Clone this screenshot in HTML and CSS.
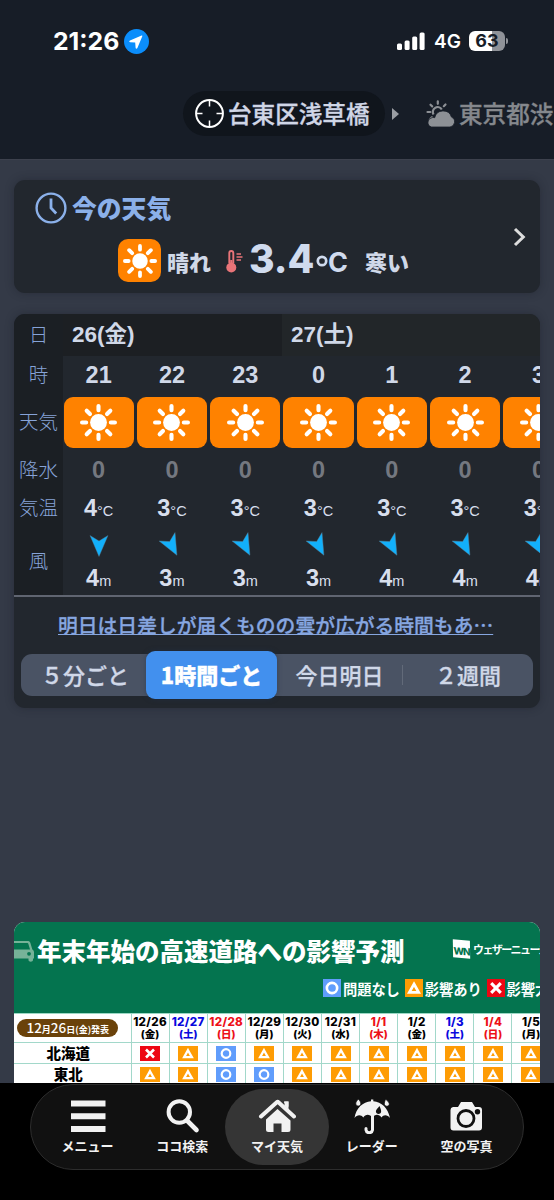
FILE: index.html
```html
<!DOCTYPE html>
<html lang="ja">

<head>
    <meta charset="UTF-8">
    <meta name="viewport" content="width=device-width, initial-scale=1.0">
    <title>マイ天気</title>
    <link rel="stylesheet" href="styles.css">
</head>

<body>
    <!-- Shared icons -->
    <svg class="sprite" width="0" height="0">
        <symbol id="sun" viewBox="0 0 36 36">
            <circle cx="18" cy="18" r="8.2" fill="#fff" />
            <path d="M18 2v4M18 30V34M2 18h4M30 18H34M6.5 6.5l3.2 3.2M26.3 26.3l3.2 3.2M6.5 29.5l3.2-3.2M26.3 9.7l3.2-3.2" stroke="#fff" stroke-width="4" stroke-linecap="round" />
        </symbol>
        <symbol id="wind" viewBox="0 0 20 22">
            <path d="M1 0.5l9 5.5 9-5.5-9 21z" fill="#12b0fb" stroke="#5c7f92" stroke-width=".4" />
        </symbol>
        <symbol id="ok" viewBox="2.5 0 15 15">
            <circle cx="10" cy="7.5" r="4.3" fill="none" stroke="#fff" stroke-width="2.2" />
        </symbol>
        <symbol id="warn" viewBox="2.5 0 15 15">
            <path d="M10 4.2l3.9 7H6.1z" fill="none" stroke="#fff" stroke-width="2.3" />
        </symbol>
        <symbol id="bad" viewBox="2.5 0 15 15">
            <path d="M6 3.5l8 8M14 3.5l-8 8" stroke="#fff" stroke-width="2.6" />
        </symbol>
    </svg>

    <header class="header">
        <div class="status-bar">
            <span class="time">21:26</span>
            <svg class="location" width="25" height="25" viewBox="0 0 25 25">
                <circle cx="12.5" cy="12.5" r="12.5" fill="#0b8dfb" />
                <path d="M17.6 6.6L6 11.4c-1.1.5-.9 1.7.2 1.8l5 .4.4 5.2c.1 1.1 1.3 1.3 1.8.2L18.3 7.300c.3-.6-.1-.9-.7-.7z" fill="#fff" />
            </svg>
            <svg class="signal" width="28" height="19" viewBox="0 0 28 19" fill="#fff">
                <rect x="0" y="11.5" width="5" height="6.5" rx="1.5" />
                <rect x="7.6" y="8.5" width="5" height="9.5" rx="1.5" />
                <rect x="15.2" y="4.5" width="5" height="13.5" rx="1.5" />
                <rect x="22.6" y="0.5" width="5" height="17.5" rx="1.5" />
            </svg>
            <span class="network">4G</span>
            <span class="battery">63</span>
            <span class="battery-tip"></span>
        </div>

        <nav class="places">
            <div class="place active">
                <svg width="29" height="29" viewBox="0 0 29 29" fill="none" stroke="#fff" stroke-width="2">
                    <circle cx="14.5" cy="14.5" r="13.4" />
                    <path d="M14.5 2v5.5M14.5 21.5V27M2 14.5h5.5M21.5 14.5H27" stroke-width="1.5" />
                </svg>
                <span>台東区浅草橋</span>
            </div>
            <span class="place-arrow"></span>
            <div class="place">
                <svg width="29" height="27" viewBox="0 0 29 27" fill="#8d9095">
                    <path d="M7.5 14.5a4.8 4.8 0 1 1 8.300-5" fill="none" stroke="#8d9095" stroke-width="2.2" />
                    <path d="M11.8 1.300v2.5M4.500 4.700l1.700 1.700M1.500 12h2.800M4.200 19l1.700-1.700M19.500 4.500l-1.700 1.700" stroke="#8d9095" stroke-width="2.2" stroke-linecap="round" />
                    <path d="M5.500 27a4.800 4.800 0 0 1 .7-9.400c1-.2 1.900-.1 2.500.1a8.700 8.700 0 0 1 16.800-.6A5.200 5.200 0 0 1 24 27z" stroke="#171d27" stroke-width=".8" />
                </svg>
                <span>東京都渋</span>
            </div>
        </nav>
    </header>

    <main class="content">
        <section class="card now">
            <h2 class="now-title">
                <svg width="32" height="32" viewBox="0 0 32 32" fill="none" stroke="#8bb0e9" stroke-width="2.4">
                    <circle cx="16" cy="16" r="14.4" />
                    <path d="M16 6.5V16l5.2 5.5" stroke-width="2.8" />
                </svg>
                <span>今の天気</span>
            </h2>
            <div class="now-row">
                <span class="now-icon"><svg width="34" height="34"><use href="#sun" /></svg></span>
                <span class="now-text">晴れ</span>
                <svg class="thermo" width="18" height="25" viewBox="0 0 18 25" fill="none" stroke="#e97478">
                    <path d="M3.3 14V4a2 2 0 0 1 4 0v10" stroke-width="1.9" />
                    <circle cx="5.3" cy="18.5" r="5" fill="#e97478" stroke="none" />
                    <path d="M5.3 11v6" stroke-width="2.2" />
                    <path d="M10.5 5h4.5M10.5 8h6M10.5 11h4.5" stroke-width="1.4" />
                </svg>
                <span class="now-temp">3.4</span>
                <svg class="degree" width="12" height="12" viewBox="0 0 12 12"><circle cx="6" cy="6" r="4.2" fill="none" stroke="#d0dbee" stroke-width="2.7" /></svg>
                <span class="now-unit">C</span>
                <span class="now-text feel">寒い</span>
            </div>
            <svg class="chevron" width="14" height="20" viewBox="0 0 14 20"><path d="M2 2l8.3 8L2 18" fill="none" stroke="#ddd" stroke-width="3" /></svg>
        </section>

        <section class="card forecast">
            <div class="table">
                <div class="labels">
                    <span class="r-day">日</span>
                    <span class="r-hour">時</span>
                    <span class="r-sky">天気</span>
                    <span class="r-rain">降水</span>
                    <span class="r-temp">気温</span>
                    <span class="r-wind">風</span>
                </div>
                <div class="scroller">
                    <div class="days">
                        <span class="day today">26(金)</span>
                        <span class="day">27(土)</span>
                    </div>
                    <div class="hours" id="hours">
                        <!-- Hour columns are generated here -->
                    </div>
                </div>
            </div>
            <a class="comment" href="#">明日は日差しが届くものの雲が広がる時間もあ…</a>
            <div class="tabs">
                <span class="tab tab-5min">５分ごと</span>
                <span class="tab active">1時間ごと</span>
                <span class="tab tab-today">今日明日</span>
                <span class="tab tab-week">２週間</span>
            </div>
        </section>

        <section class="road">
            <div class="road-head">
                <div class="road-title">
                    <svg width="20" height="22" viewBox="0 0 20 22" fill="#76b298">
                        <path d="M0 1h13.5c1.600 0 2.400.6 2.900 1.900L18.500 10h-2.300l-1.900-6.300c-.1-.4-.4-.6-.9-.6H0z" />
                        <path d="M0 9.500h17.500c1.500 0 2.500 1.200 2.500 2.700V18.500h-1V20c0 2.200-4.500 2.200-4.500 0v-1.500H0z" />
                        <circle cx="15" cy="13.800" r="1.900" fill="#04744f" />
                    </svg>
                    <h3>年末年始の高速道路への影響予測</h3>
                    <span class="brand-mark">WN</span>
                    <span class="brand">ウェザーニュース</span>
                </div>
                <div class="legend">
                    <svg class="mark ok"><use href="#ok" /></svg><span>問題なし</span>
                    <svg class="mark warn"><use href="#warn" /></svg><span>影響あり</span>
                    <svg class="mark bad"><use href="#bad" /></svg><span>影響大</span>
                </div>
            </div>
            <div class="road-table" id="roadTable">
                <div class="issued-cell"><span class="issued"><b>12</b>月<b>26</b>日(金)発表</span></div>
            </div>
        </section>
    </main>

    <footer class="footer">
        <nav class="tab-bar">
            <a class="item">
                <svg width="36" height="36" viewBox="0 0 36 36" fill="#f2f2f2">
                    <path d="M1 2.5h34.5v6H1zM1 15.3h34.5v6H1zM1 28h34.5v6H1z" />
                </svg>
                <span>メニュー</span>
            </a>
            <a class="item">
                <svg width="36" height="36" viewBox="0 0 36 36" fill="none" stroke="#f2f2f2">
                    <circle cx="15.3" cy="14" r="10.7" stroke-width="4" />
                    <path d="M23 22.5L32.5 32" stroke-width="4.6" stroke-linecap="round" />
                </svg>
                <span>ココ検索</span>
            </a>
            <a class="item active">
                <svg width="38" height="36" viewBox="0 0 38 36" fill="none">
                    <path d="M26 3.5h4.5v12L26 11z" fill="#f2f2f2" />
                    <path d="M19.500 11L32.500 22.500V31.500a2.500 2.500 0 0 1-2.500 2.500h-6.500v-8.500h-8V34H10.500A2.500 2.500 0 0 1 8 31.500V21.500z" fill="#f2f2f2" />
                    <path d="M3 18.5L18.800 4.200a1.200 1.200 0 0 1 1.600 0L36 18.500" stroke="#353535" stroke-width="7" />
                    <path d="M26.500 3.500h4v8l-4-3.500z" fill="#f2f2f2" />
                    <path d="M3 18.500L18.800 4.200a1.200 1.200 0 0 1 1.600 0L36 18.500" stroke="#f2f2f2" stroke-width="4" stroke-linecap="round" />
                </svg>
                <span>マイ天気</span>
            </a>
            <a class="item">
                <svg width="38" height="36" viewBox="0 0 38 36" fill="#f2f2f2">
                    <path d="M1.5 20C3 10 10 3.700 18 3.200V1.500h2.300v1.700C28.500 3.700 35 10 37 20c-2.500-3.600-6.500-3.800-8.500-.6-2.400-3.400-6.600-3.400-9 0-2.800-3.400-7-3.400-9.200 0-2.300-3.200-6.300-3-8.800.6z" />
                    <path d="M19.500 17v15a3.300 3.300 0 0 1-6.500 0v-1.500" fill="none" stroke="#f2f2f2" stroke-width="3" stroke-linecap="round" />
                    <path d="M5.500 1c-2.200 2.400-3 3.500-2.700 5 .6 2.700 4.400 2.700 5 0 .4-1.500-.8-2.700-2.300-5zM32.500 1c2.200 2.400 4.200 3.500 3.800 5.300-.5 2.600-4.700 2.600-5-.2-.2-1.500.6-2.600 1.200-5.100z" stroke="#111" stroke-width=".8" />
                    <path d="M26.500 8c-2 2.400-3.600 3.800-3.600 5.600 0 3 4.800 3.100 5.200.4.300-1.800-.6-3.200-1.600-6z" fill="#111" />
                </svg>
                <span>レーダー</span>
            </a>
            <a class="item">
                <svg width="36" height="36" viewBox="0 0 36 36" fill="#f2f2f2">
                    <path d="M5 9h5l3-5h11l3 5h4a3 3 0 0 1 3 3v17.500a3 3 0 0 1-3 3H5.500a3 3 0 0 1-3-3V12A3 3 0 0 1 5 9z" />
                    <circle cx="18" cy="20.5" r="8" stroke="#111" stroke-width="2.8" />
                    <circle cx="29.5" cy="13.8" r="2.7" fill="#111" />
                </svg>
                <span>空の写真</span>
            </a>
        </nav>
    </footer>

    <script>

        const hourly = [
            { hour: 21, rain: 0, temp: 4, wind: 4, angle: 0 },
            { hour: 22, rain: 0, temp: 3, wind: 3, angle: -28 },
            { hour: 23, rain: 0, temp: 3, wind: 3, angle: -28 },
            { hour: 0, rain: 0, temp: 3, wind: 3, angle: -28 },
            { hour: 1, rain: 0, temp: 3, wind: 4, angle: -28 },
            { hour: 2, rain: 0, temp: 3, wind: 4, angle: -28 },
            { hour: 3, rain: 0, temp: 3, wind: 4, angle: -28 }
        ];

        const roadDays = [
            ['12/26', '金', ''], ['12/27', '土', 'sat'], ['12/28', '日', 'holiday'], ['12/29', '月', ''],
            ['12/30', '火', ''], ['12/31', '水', ''], ['1/1', '木', 'holiday'], ['1/2', '金', ''],
            ['1/3', '土', 'sat'], ['1/4', '日', 'holiday'], ['1/5', '月', '']
        ];

        const roadAreas = [
            { name: '北海道', marks: ['bad', 'warn', 'ok', 'warn', 'warn', 'warn', 'warn', 'warn', 'warn', 'warn', 'warn'] },
            { name: '東北', marks: ['warn', 'warn', 'ok', 'ok', 'warn', 'warn', 'warn', 'warn', 'warn', 'warn', 'warn'] }
        ];

        document.getElementById('hours').innerHTML = hourly.map(h => `
            <div class="hour">
                <span class="r-hour">${h.hour}</span>
                <span class="sky"><svg width="37" height="37"><use href="#sun" /></svg></span>
                <span class="r-rain">${h.rain}</span>
                <span class="r-temp">${h.temp}<small>°C</small></span>
                <svg class="arrow" width="20" height="22" style="transform: rotate(${h.angle}deg)"><use href="#wind" /></svg>
                <span class="speed">${h.wind}<small>m</small></span>
            </div>`).join('');

        const roadTable = document.getElementById('roadTable');
        roadDays.forEach(([date, day, type]) => {
            roadTable.innerHTML += `<div class="date ${type}"><span>${date}</span><small>(${day})</small></div>`;
        });
        roadAreas.forEach(area => {
            roadTable.innerHTML += `<div class="area">${area.name}</div>` +
                area.marks.map(m => `<div class="cell"><svg class="mark ${m}"><use href="#${m}" /></svg></div>`).join('');
        });

    </script>
</body>

</html>
```
FILE: styles.css
```css
* {
    box-sizing: border-box;
}

body {
    margin: 0;
    width: 554px;
    height: 1200px;
    display: flex;
    flex-direction: column;
    overflow: hidden;
    background-color: #343a47;
    color: #d0d8e8;
    font-family: "Liberation Sans", "Noto Sans CJK JP", sans-serif;
    white-space: nowrap;
}

svg {
    flex-shrink: 0;
}

h2,
h3 {
    margin: 0;
}

.sprite {
    position: absolute;
}

/* Header */
.header {
    height: 160px;
    flex-shrink: 0;
    background-color: #171d27;
    border-bottom: 1px solid #3d414d;
}

.status-bar {
    display: flex;
    align-items: center;
    height: 82px;
    padding: 0 46px 0 53px;
    color: #fff;
    font-family: Inter, sans-serif;
}

.time {
    width: 70px;
    font-size: 24.8px;
    font-weight: 700;
}

.location {
    margin: 1px auto 0 1px;
}

.network {
    margin: 1px 8px 0 9px;
    width: 27px;
    font-size: 19px;
    font-weight: 600;
}

.battery {
    width: 36px;
    height: 20px;
    border-radius: 6px;
    background: linear-gradient(90deg, #fff 63%, #8f9298 63%);
    color: #171d27;
    font-size: 18px;
    font-weight: 700;
    line-height: 20px;
    text-align: center;
}

.battery-tip {
    width: 2px;
    height: 6px;
    margin-left: 1px;
    border-radius: 0 2px 2px 0;
    background-color: #8f9298;
}

.places {
    display: flex;
    align-items: center;
    margin-top: 9px;
    padding-left: 183px;
    color: #85888d;
    font-family: "Noto Sans CJK JP", sans-serif;
    font-size: 23.6px;
    font-weight: 500;
    -webkit-text-stroke: 0.3px;
}

.place {
    display: flex;
    align-items: center;
    gap: 4px;
    height: 45px;
    flex-shrink: 0;
    line-height: 45px;
}

.place.active {
    width: 202px;
    padding-left: 12px;
    border-radius: 23px;
    background-color: #10151c;
    color: #d0d6e6;
}

.place-arrow {
    flex-shrink: 0;
    margin: 0 27px 0 7px;
    border: 6px solid transparent;
    border-left: 7px solid #9a9da3;
    border-right: 0;
}

/* Cards */
.content {
    flex: 1;
    min-height: 0;
    padding: 20px 14px 0;
    overflow: hidden;
}

.card {
    overflow: hidden;
    border-radius: 11px;
    background-color: #22272e;
    box-shadow: 0 0 8px rgba(20, 24, 32, 0.35);
}

.now {
    display: grid;
    grid-template-columns: 1fr 27px;
    grid-template-rows: 55px 58px;
    align-items: center;
    height: 113px;
    font-family: "Noto Sans CJK JP", sans-serif;
}

.now-title {
    display: flex;
    align-items: center;
    gap: 5px;
    height: 32px;
    padding-left: 21px;
    color: #8bb0e9;
    font-size: 24.8px;
    font-weight: 900;
}

.now-title span {
    margin-top: -2px;
}

.now-row {
    grid-row: 2;
    display: flex;
    align-items: center;
    height: 44px;
    margin-bottom: 7px;
    padding-left: 104px;
}

.now-icon {
    display: flex;
    align-items: center;
    justify-content: center;
    width: 43px;
    height: 43px;
    margin-right: 6px;
    border-radius: 10px;
    background-color: #ff8200;
}

.now-text {
    margin-top: 1px;
    font-size: 22px;
    font-weight: 900;
}

.thermo {
    margin: 2px 5px 0 15px;
}

.now-temp {
    width: 67px;
    margin-top: -5px;
    color: #d0dbee;
    font-family: Inter, sans-serif;
    font-size: 39px;
    font-weight: 800;
}

.degree {
    margin-top: 1px;
}

.now-unit {
    width: 20px;
    margin-top: 4px;
    color: #d0dbee;
    font-family: Inter, sans-serif;
    font-size: 27px;
    font-weight: 700;
}

.feel {
    margin-left: 17px;
}

.chevron {
    grid-row: 1 / 3;
    grid-column: 2;
}

/* Hourly forecast */
.forecast {
    height: 394px;
    margin-top: 21px;
}

.table {
    display: flex;
    height: 283px;
    border-bottom: 2px solid #606571;
}

.labels {
    display: flex;
    flex-direction: column;
    width: 49px;
    flex-shrink: 0;
    background-color: #1b1f24;
    color: #86a3d8;
    font-family: "Noto Sans CJK JP", sans-serif;
    font-size: 19.5px;
    font-weight: 300;
}

.labels span {
    display: flex;
    align-items: center;
    justify-content: center;
    padding-bottom: 3px;
}

.r-day {
    height: 42px;
}

.r-hour {
    height: 37px;
}

.r-sky {
    height: 58px;
}

.r-rain {
    height: 38px;
}

.r-temp {
    height: 38px;
}

.r-wind {
    height: 68px;
}

.scroller {
    flex: 1;
    overflow: hidden;
    font-size: 23.5px;
    font-weight: 700;
}

.days {
    display: flex;
    height: 42px;
    line-height: 42px;
}

.day {
    width: 307px;
    flex-shrink: 0;
    padding-left: 9px;
    background-color: #222629;
    font-size: 22.5px;
}

.day.today {
    width: 219px;
    background-color: #1c1f23;
}

.hours {
    display: flex;
    gap: 3px;
    padding-left: 0.5px;
}

.hour {
    display: flex;
    flex-direction: column;
    align-items: center;
    width: 70.3px;
    flex-shrink: 0;
    line-height: 38px;
}

.sky {
    display: flex;
    align-items: center;
    justify-content: center;
    width: 100%;
    height: 51px;
    margin: 4px 0 3px;
    border-radius: 9px;
    background-color: #ff8200;
}

.hour .r-rain {
    color: #747880;
}

.hour .r-temp,
.speed {
    color: #d8dfed;
}

.speed {
    line-height: 37px;
}

.hour small {
    font-size: 14.5px;
    font-weight: 400;
}

.arrow {
    margin: 8px 0 3px;
}

.comment {
    display: block;
    height: 57px;
    padding-left: 44px;
    color: #86a6e0;
    font-family: "Noto Sans CJK JP", sans-serif;
    font-size: 19.8px;
    font-weight: 500;
    line-height: 56px;
    -webkit-text-stroke: 0.3px;
}

.tabs {
    display: grid;
    grid-template-columns: 125px 131px 126px 130px;
    grid-template-rows: 42px;
    align-items: center;
    height: 42px;
    margin: 0 7px;
    border-radius: 11px;
    background-color: #4a5364;
    font-family: "Noto Sans CJK JP", sans-serif;
    font-size: 22px;
    font-weight: 500;
    text-align: center;
    -webkit-text-stroke: 0.3px;
}

.tab-5min {
    padding: 0 0 2px 3px;
}

.tab-week {
    padding-bottom: 2px;
}

.tab.active {
    height: 48px;
    border-radius: 9px;
    background-color: #4290ee;
    color: #fff;
    font-weight: 900;
    line-height: 47px;
    box-shadow: 0 0 5px rgba(30, 50, 80, 0.5);
}

.tab-today {
    height: 20px;
    border-right: 1px solid #626a79;
    line-height: 18px;
}

/* Road forecast */
.road {
    height: 170px;
    margin-top: 214px;
    overflow: hidden;
    border-radius: 11px 11px 0 0;
    background-color: #fff;
    color: #000;
    font-family: "Noto Sans CJK JP", sans-serif;
}

.road-head {
    height: 92px;
    background-color: #04744f;
    border-bottom: 1px solid #9bd8c4;
    color: #fff;
}

.road-title {
    display: flex;
    align-items: center;
    height: 57px;
}

.road-title h3 {
    width: 414px;
    flex-shrink: 0;
    margin-left: 3px;
    font-size: 24.5px;
    font-weight: 900;
}

.brand-mark {
    width: 17px;
    height: 18px;
    flex-shrink: 0;
    margin: 0 3px 4px 2px;
    transform: skewX(6deg) rotate(5deg);
    background-color: #fff;
    color: #04744f;
    font-family: Inter, sans-serif;
    font-size: 10px;
    font-weight: 800;
    letter-spacing: -1px;
    line-height: 22px;
    text-align: center;
}

.brand {
    margin-bottom: 3px;
    font-size: 11px;
    font-weight: 700;
    letter-spacing: -1.6px;
}

.legend {
    display: flex;
    align-items: center;
    height: 18px;
    padding-left: 309px;
    font-size: 14.3px;
    font-weight: 700;
}

.legend span {
    flex-shrink: 0;
    margin: 0 5px 0 2px;
    letter-spacing: -0.1px;
}

.mark {
    width: 20px;
    height: 15px;
}

.legend .mark {
    width: 18px;
    height: 18px;
}

.ok {
    background-color: #609dfc;
}

.warn {
    background-color: #fe9c04;
}

.bad {
    background-color: #ed0713;
}

.road-table {
    display: grid;
    grid-template-columns: 117.5px repeat(11, 38.1px);
    grid-template-rows: 29px 21px 21px;
}

.road-table > div {
    display: flex;
    align-items: center;
    justify-content: center;
    border-right: 1px solid #a2d8ca;
    border-bottom: 1px solid #a2d8ca;
}

.issued {
    width: 101px;
    height: 18px;
    margin-right: 9px;
    border-radius: 9px;
    background-color: #6a420a;
    color: #fff;
    font-size: 9px;
    font-weight: 700;
    line-height: 16px;
    text-align: center;
}

.issued b {
    font-size: 13.5px;
    font-weight: 500;
}

.road-table .date {
    flex-direction: column;
    font-family: Inter, "Noto Sans CJK JP", sans-serif;
    font-size: 11.6px;
    font-weight: 800;
    line-height: 14px;
}

.date span {
    letter-spacing: 0.3px;
}

.date small {
    font-size: 10.5px;
    line-height: 12px;
}

.road-table .sat {
    color: #0808dd;
}

.road-table .holiday {
    color: #ed1018;
}

.area {
    padding-right: 8px;
    font-size: 14.5px;
    font-weight: 900;
    line-height: 20px;
}

/* Bottom bar */
.footer {
    height: 117px;
    flex-shrink: 0;
    padding: 1px 30px 0;
    background-color: #000;
}

.tab-bar {
    display: flex;
    align-items: center;
    justify-content: center;
    height: 86px;
    border: 1px solid #2d2d2d;
    border-radius: 43px;
    background-color: #111;
}

.item {
    display: flex;
    flex-direction: column;
    align-items: center;
    width: 94.7px;
    height: 76px;
    padding-top: 9px;
    flex-shrink: 0;
    color: #f2f2f2;
    font-family: "Noto Sans CJK JP", sans-serif;
    font-size: 13px;
    font-weight: 700;
    line-height: 23px;
}

.item.active {
    width: 104px;
    margin: 0 -4.65px;
    border-radius: 38px;
    background-color: #353535;
}
```
